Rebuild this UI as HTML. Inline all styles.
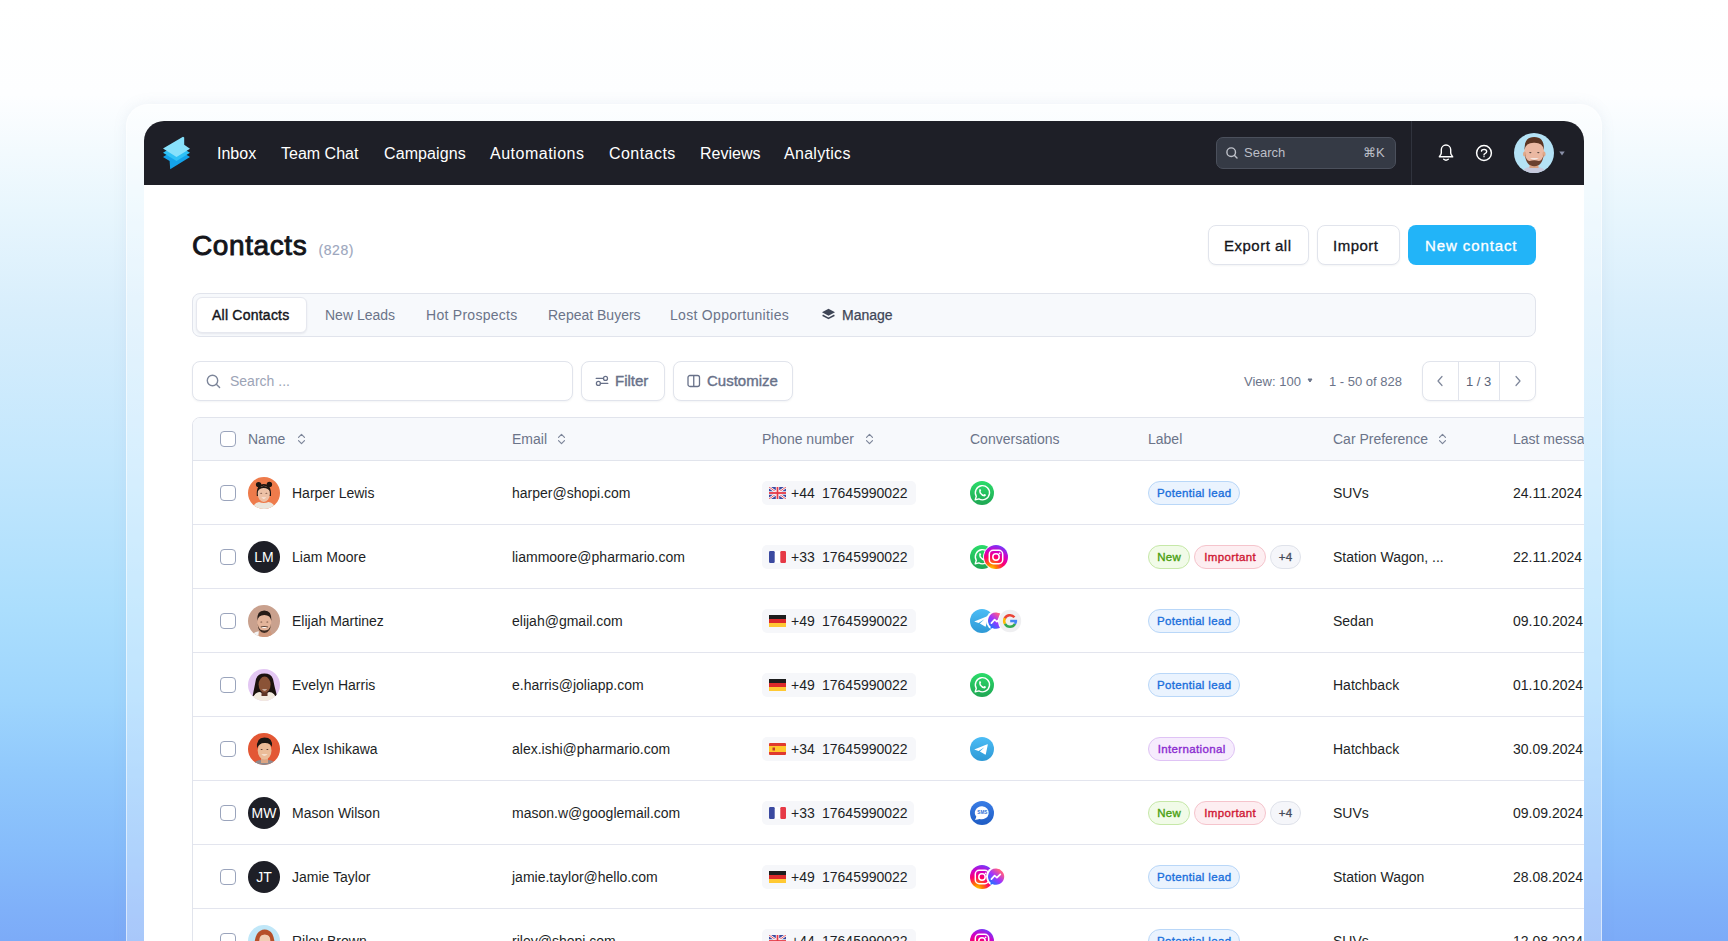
<!DOCTYPE html>
<html><head><meta charset="utf-8"><style>
*{box-sizing:border-box;margin:0;padding:0}
html,body{width:1728px;height:941px;overflow:hidden}
body{position:relative;font-family:"Liberation Sans",sans-serif;color:#1d1f26;
background:linear-gradient(180deg,#ffffff 0%,#fdfeff 10%,#e8f6fd 22.3%,#d8eefc 32.9%,#c3e7fd 48.9%,#abdefd 64.8%,#9ed5fd 74.4%,#91c9fc 81.8%,#86bcfb 90.3%,#7fb0f9 96.7%,#7cabf8 100%)}
.abs{position:absolute}
#frame{position:absolute;left:126px;top:104px;width:1476px;height:900px;border-radius:22px;background:rgba(255,255,255,0.34);box-shadow:0 0 14px rgba(120,140,170,0.10);border:1px solid rgba(255,255,255,0.55)}
#app{position:absolute;left:144px;top:121px;width:1440px;height:900px;background:#fff;border-radius:20px 20px 0 0;overflow:hidden}
#nav{position:absolute;left:0;top:0;width:1440px;height:64px;background:#1e1f27}
.nv{position:absolute;top:1px;height:64px;line-height:64px;color:#fff;font-size:16px;white-space:nowrap}
.t{position:absolute;white-space:nowrap}
.btn{position:absolute;height:40px;border:1px solid #e1e4ec;border-radius:8px;background:#fff;box-shadow:0 1px 2px rgba(20,30,60,0.05)}
.pill{position:absolute;height:24px;border-radius:12px;border:1px solid;font-size:11.5px;line-height:23px;letter-spacing:0.35px;text-indent:0.35px;-webkit-text-stroke:0.35px currentColor;white-space:nowrap;text-align:center}
.cb{position:absolute;width:16px;height:16px;border:1.5px solid #9aa4bc;border-radius:4px;background:#fff}
.tbl-row{position:absolute;left:0;width:1400px;height:64px;border-bottom:1px solid #e3e5ee}
.phone{position:absolute;height:24px;background:#f6f7fa;border-radius:5px}
.av{position:absolute;width:32px;height:32px;border-radius:16px;overflow:hidden}
.ini{background:#1e1f27;color:#fff;font-size:14px;line-height:32px;text-align:center}
</style></head><body>
<div id="frame"></div>
<div id="app">
<div id="nav">
<svg class="abs" style="left:18px;top:15px" width="30" height="35" viewBox="162 136 30 35">
<polygon points="163,157 176.5,148.6 190,157 170.2,169.2 169.6,161" fill="#14a3ea"/>
<polygon points="163,152.7 176.5,144.5 190,152.8 176.5,161" fill="#2ec1f6"/>
<polygon points="163,148.6 183,136.8 184.2,137.6 184.2,144.8 190,148.8 176.5,157" fill="#87e1fb"/>
</svg>
<div class="nv" style="left:73px;letter-spacing:0px">Inbox</div>
<div class="nv" style="left:137px;letter-spacing:0px">Team Chat</div>
<div class="nv" style="left:240px;letter-spacing:0.1px">Campaigns</div>
<div class="nv" style="left:346px;letter-spacing:0.5px">Automations</div>
<div class="nv" style="left:465px;letter-spacing:0.45px">Contacts</div>
<div class="nv" style="left:556px;letter-spacing:0px">Reviews</div>
<div class="nv" style="left:640px;letter-spacing:0.3px">Analytics</div>
<div class="abs" style="left:1072px;top:16px;width:180px;height:32px;background:#353a45;border:1px solid #4b505c;border-radius:7px"></div>
<svg class="abs" style="left:1082px;top:26px" width="12" height="12" viewBox="0 0 12 12"><circle cx="5.2" cy="5.2" r="4.3" fill="none" stroke="#bfc2ca" stroke-width="1.4"/><line x1="8.3" y1="8.3" x2="11" y2="11" stroke="#bfc2ca" stroke-width="1.4" stroke-linecap="round"/></svg>
<div class="t" style="left:1100px;top:24px;font-size:13px;line-height:16px;color:#bcbfc8">Search</div>
<div class="t" style="left:1219px;top:24px;font-size:13px;line-height:16px;color:#bcbfc8">&#8984;K</div>
<div class="abs" style="left:1267px;top:0;width:1px;height:64px;background:#30333d"></div>
<svg class="abs" style="left:1292px;top:22px" width="20" height="20" viewBox="0 0 20 20"><path d="M3.3 13.8 L4.7 11.7 Q5.3 10.7 5.3 9.4 V6.7 A4.7 4.7 0 0 1 14.7 6.7 V9.4 Q14.7 10.7 15.3 11.7 L16.7 13.8 Z" fill="none" stroke="#fff" stroke-width="1.4" stroke-linejoin="round"/><path d="M7.7 16.3 Q10 18.1 12.3 16.3" fill="none" stroke="#fff" stroke-width="1.4" stroke-linecap="round"/></svg>
<svg class="abs" style="left:1331px;top:23px" width="18" height="18" viewBox="0 0 18 18"><circle cx="9" cy="9" r="7.4" fill="none" stroke="#fff" stroke-width="1.5"/><path d="M6.5 7.1 Q6.7 5.4 9.1 5.4 Q11.7 5.5 11.7 7.6 Q11.7 9 10 9.6 Q9 10 9 10.9" fill="none" stroke="#fff" stroke-width="1.4" stroke-linecap="round"/><rect x="8.3" y="12.2" width="1.4" height="1" fill="#fff"/></svg>
<svg class="abs" style="left:1370px;top:12px" width="40" height="40" viewBox="0 0 40 40">
<defs><clipPath id="cav"><circle cx="20" cy="20" r="20"/></clipPath></defs>
<g clip-path="url(#cav)">
<rect width="40" height="40" fill="#b4e2f5"/>
<path d="M6 42 Q8 34 20 33.5 Q32 34 34 42 Z" fill="#c7c9dc"/>
<rect x="15.5" y="27" width="9" height="8" fill="#d9a283"/>
<ellipse cx="20.3" cy="19.5" rx="10" ry="13" fill="#eab8a2"/>
<ellipse cx="10.6" cy="21" rx="1.6" ry="2.6" fill="#e0a888"/><ellipse cx="30" cy="21" rx="1.6" ry="2.6" fill="#e0a888"/>
<path d="M10.6 17 Q9.8 4 20.2 4 Q30.6 4 29.8 17 Q28.8 9.6 20.2 9.8 Q11.6 9.6 10.6 17 Z" fill="#5a3422"/>
<path d="M11 21 Q11.5 33 20.3 33.2 Q29 33 29.6 21 Q28.6 27.6 25 28 Q20.3 26.6 15.6 28 Q12 27.6 11 21 Z" fill="#6a4130"/>
<path d="M15.8 25 Q20.3 28.6 24.8 25 Z" fill="#f4e8e4"/>
<ellipse cx="16.3" cy="19.6" rx="1.2" ry="0.7" fill="#55463f"/><ellipse cx="24.3" cy="19.6" rx="1.2" ry="0.7" fill="#55463f"/>
</g></svg>
<svg class="abs" style="left:1415px;top:30px" width="6" height="5" viewBox="0 0 6 5"><path d="M0.3 0.6 H5.7 L3 4.4 Z" fill="#8a90a8"/></svg>
</div>
<div class="t" style="left:48px;top:109px;font-size:28px;line-height:32px;-webkit-text-stroke:0.9px #14151a;letter-spacing:0.6px;color:#14151a">Contacts</div>
<div class="t" style="left:174.5px;top:121.30000000000001px;font-size:14px;line-height:16px;letter-spacing:0.55px;-webkit-text-stroke:0.15px #9ca6bd;color:#9ca6bd">(828)</div>
<div class="btn" style="left:1064px;top:104px;width:101px"></div>
<div class="t" style="left:1080px;top:115.6px;font-size:15px;line-height:18px;-webkit-text-stroke:0.3px #14151a;letter-spacing:0.5px;color:#14151a">Export all</div>
<div class="btn" style="left:1173px;top:104px;width:83px"></div>
<div class="t" style="left:1189px;top:115.6px;font-size:15px;line-height:18px;-webkit-text-stroke:0.3px #14151a;letter-spacing:0.5px;color:#14151a">Import</div>
<div class="abs" style="left:1264px;top:104px;width:128px;height:40px;border-radius:8px;background:#22b4f8"></div>
<div class="t" style="left:1281px;top:115.6px;font-size:15px;line-height:18px;-webkit-text-stroke:0.3px #fff;letter-spacing:0.9px;color:#fff">New contact</div>
<div class="abs" style="left:48px;top:172px;width:1344px;height:44px;background:#f7f9fc;border:1px solid #e1e4ec;border-radius:8px"></div>
<div class="abs" style="left:52px;top:176px;width:111px;height:36px;background:#fff;border:1px solid #e6e8ef;border-radius:6px;box-shadow:0 1px 2px rgba(20,30,60,0.08)"></div>
<div class="t" style="left:68px;top:186px;font-size:14px;line-height:16px;font-weight:normal;-webkit-text-stroke:0.4px #14151a;letter-spacing:0.23px;color:#14151a">All Contacts</div>
<div class="t" style="left:181px;top:186px;font-size:14px;line-height:16px;font-weight:normal;color:#6b7489">New Leads</div>
<div class="t" style="left:282px;top:186px;font-size:14px;line-height:16px;font-weight:normal;letter-spacing:0.28px;color:#6b7489">Hot Prospects</div>
<div class="t" style="left:404px;top:186px;font-size:14px;line-height:16px;font-weight:normal;color:#6b7489">Repeat Buyers</div>
<div class="t" style="left:526px;top:186px;font-size:14px;line-height:16px;font-weight:normal;letter-spacing:0.3px;color:#6b7489">Lost Opportunities</div>
<div class="t" style="left:698px;top:186px;font-size:14px;line-height:16px;font-weight:normal;-webkit-text-stroke:0.25px #3f4657;color:#3f4657">Manage</div>
<svg class="abs" style="left:677px;top:187px" width="15" height="13" viewBox="0 0 15 13"><path d="M7.5 0.8 L14 4.3 L7.5 7.8 L1 4.3 Z" fill="#3f4657"/><path d="M1.6 7.2 L7.5 10.4 L13.4 7.2" fill="none" stroke="#3f4657" stroke-width="1.6" stroke-linejoin="round"/></svg>
<div class="btn" style="left:48px;top:240px;width:381px"></div>
<svg class="abs" style="left:62px;top:253px" width="15" height="15" viewBox="0 0 15 15"><circle cx="6.5" cy="6.5" r="5.2" fill="none" stroke="#7d869a" stroke-width="1.4"/><line x1="10.3" y1="10.3" x2="13.6" y2="13.6" stroke="#7d869a" stroke-width="1.4" stroke-linecap="round"/></svg>
<div class="t" style="left:86px;top:252px;font-size:14px;line-height:16px;color:#9ca4b6">Search ...</div>
<div class="btn" style="left:437px;top:240px;width:84px"></div>
<svg class="abs" style="left:451px;top:254px" width="14" height="12" viewBox="0 0 14 12"><line x1="1.2" y1="3.4" x2="8.5" y2="3.4" stroke="#687189" stroke-width="1.25" stroke-linecap="round"/><line x1="5.4" y1="8.4" x2="12.8" y2="8.4" stroke="#687189" stroke-width="1.25" stroke-linecap="round"/><circle cx="10.5" cy="3.4" r="2" fill="none" stroke="#687189" stroke-width="1.25"/><circle cx="3.4" cy="8.4" r="2" fill="none" stroke="#687189" stroke-width="1.25"/></svg>
<div class="t" style="left:471px;top:252px;font-size:15px;line-height:16px;-webkit-text-stroke:0.4px #687189;color:#687189">Filter</div>
<div class="btn" style="left:529px;top:240px;width:120px"></div>
<svg class="abs" style="left:543px;top:253px" width="14" height="14" viewBox="0 0 14 14"><rect x="1" y="1.5" width="11.5" height="11" rx="2" fill="none" stroke="#687189" stroke-width="1.3"/><line x1="6.75" y1="1.5" x2="6.75" y2="12.5" stroke="#687189" stroke-width="1.3"/></svg>
<div class="t" style="left:563px;top:252px;font-size:15px;line-height:16px;-webkit-text-stroke:0.4px #687189;color:#687189">Customize</div>
<div class="t" style="left:1100px;top:253px;font-size:13px;line-height:15px;color:#6b7489">View: 100</div>
<svg class="abs" style="left:1163px;top:257px" width="6" height="5" viewBox="0 0 6 5"><path d="M1 1 H5 L3 4 Z" fill="#6b7489" stroke="#6b7489" stroke-width="1" stroke-linejoin="round"/></svg>
<div class="t" style="left:1185px;top:253px;font-size:13px;line-height:15px;color:#6b7489">1 - 50 of 828</div>
<div class="btn" style="left:1278px;top:240px;width:114px"></div>
<div class="abs" style="left:1314px;top:240px;width:1px;height:40px;background:#e1e4ec"></div>
<div class="abs" style="left:1355px;top:240px;width:1px;height:40px;background:#e1e4ec"></div>
<svg class="abs" style="left:1291px;top:254px" width="10" height="12" viewBox="0 0 10 12"><path d="M7 1.5 L3 6 L7 10.5" fill="none" stroke="#7d869a" stroke-width="1.2" stroke-linecap="round" stroke-linejoin="round"/></svg>
<div class="t" style="left:1322px;top:253px;font-size:13px;line-height:15px;color:#5a6378">1 / 3</div>
<svg class="abs" style="left:1369px;top:254px" width="10" height="12" viewBox="0 0 10 12"><path d="M3 1.5 L7 6 L3 10.5" fill="none" stroke="#7d869a" stroke-width="1.2" stroke-linecap="round" stroke-linejoin="round"/></svg>
<div class="abs" style="left:48px;top:296px;width:1500px;height:700px;border:1px solid #e1e4ec;border-radius:8px 0 0 0;overflow:hidden"><div class="abs" style="left:0;top:0;width:1500px;height:43px;background:#f7f9fc;border-bottom:1px solid #e1e4ec"></div>
<div class="cb" style="left:27px;top:13px"></div>
<div class="t" style="left:55px;top:13px;font-size:14px;line-height:16px;color:#6b7489">Name</div>
<svg class="abs" style="left:104px;top:15px" width="9" height="12" viewBox="0 0 9 12"><path d="M1.5 4.3 L4.5 1.3 L7.5 4.3 M1.5 7.7 L4.5 10.7 L7.5 7.7" fill="none" stroke="#7d869a" stroke-width="1.2" stroke-linecap="round" stroke-linejoin="round"/></svg>
<div class="t" style="left:319px;top:13px;font-size:14px;line-height:16px;color:#6b7489">Email</div>
<svg class="abs" style="left:364px;top:15px" width="9" height="12" viewBox="0 0 9 12"><path d="M1.5 4.3 L4.5 1.3 L7.5 4.3 M1.5 7.7 L4.5 10.7 L7.5 7.7" fill="none" stroke="#7d869a" stroke-width="1.2" stroke-linecap="round" stroke-linejoin="round"/></svg>
<div class="t" style="left:569px;top:13px;font-size:14px;line-height:16px;color:#6b7489">Phone number</div>
<svg class="abs" style="left:672px;top:15px" width="9" height="12" viewBox="0 0 9 12"><path d="M1.5 4.3 L4.5 1.3 L7.5 4.3 M1.5 7.7 L4.5 10.7 L7.5 7.7" fill="none" stroke="#7d869a" stroke-width="1.2" stroke-linecap="round" stroke-linejoin="round"/></svg>
<div class="t" style="left:777px;top:13px;font-size:14px;line-height:16px;color:#6b7489">Conversations</div>
<div class="t" style="left:955px;top:13px;font-size:14px;line-height:16px;color:#6b7489">Label</div>
<div class="t" style="left:1140px;top:13px;font-size:14px;line-height:16px;color:#6b7489">Car Preference</div>
<svg class="abs" style="left:1245px;top:15px" width="9" height="12" viewBox="0 0 9 12"><path d="M1.5 4.3 L4.5 1.3 L7.5 4.3 M1.5 7.7 L4.5 10.7 L7.5 7.7" fill="none" stroke="#7d869a" stroke-width="1.2" stroke-linecap="round" stroke-linejoin="round"/></svg>
<div class="t" style="left:1320px;top:13px;font-size:14px;line-height:16px;color:#6b7489">Last message</div>
<div class="tbl-row" style="top:43px"></div>
<div class="cb" style="left:27px;top:67px"></div>
<svg class="abs" style="left:55px;top:59px" width="32" height="32" viewBox="0 0 32 32"><defs><clipPath id="charper"><circle cx="16" cy="16" r="16"/></clipPath></defs><g clip-path="url(#charper)"><rect width="32" height="32" fill="#ee7b4b"/><path d="M8.8 19 Q8 7.2 15.8 7 Q23.6 7.2 23 19 Z" fill="#1d1511"/><circle cx="10.6" cy="7.6" r="2.7" fill="#1d1511"/><circle cx="21.4" cy="7.4" r="2.7" fill="#1d1511"/><path d="M4 34 Q5 26 11 25 Q15.8 27 20.6 25 Q27 26 28 34 Z" fill="#ebe6dc"/><ellipse cx="15.8" cy="16.8" rx="6.1" ry="8.1" fill="#edc1a6"/><path d="M9.7 14.6 Q9.8 9.2 15.8 9.1 Q21.8 9.2 21.9 14.6 Q20.4 11.2 15.8 11.1 Q11.2 11.2 9.7 14.6 Z" fill="#1d1511"/><ellipse cx="13.2" cy="16.2" rx="1" ry="0.55" fill="#7a5546"/><ellipse cx="18.4" cy="16.2" rx="1" ry="0.55" fill="#7a5546"/><path d="M13.3 20.6 Q15.8 22.8 18.3 20.6 Z" fill="#fff2ee"/></g></svg>
<div class="t" style="left:99px;top:67px;font-size:14px;line-height:16px;color:#1d1f26">Harper Lewis</div>
<div class="t" style="left:319px;top:67px;font-size:14px;line-height:16px;color:#1d1f26">harper@shopi.com</div>
<div class="phone" style="left:569px;top:63px;width:154px"></div>
<svg class="abs" style="left:576px;top:69px" width="17" height="12" viewBox="0 0 17 12"><rect width="17" height="12" rx="1.5" fill="#3b4aa0"/><path d="M0 0 L17 12 M17 0 L0 12" stroke="#fff" stroke-width="2.4"/><path d="M0 0 L17 12 M17 0 L0 12" stroke="#e63946" stroke-width="0.8"/><rect x="6.8" y="0" width="3.4" height="12" fill="#fff"/><rect x="0" y="4.3" width="17" height="3.4" fill="#fff"/><rect x="7.6" y="0" width="1.8" height="12" fill="#e63946"/><rect x="0" y="5.1" width="17" height="1.8" fill="#e63946"/></svg>
<div class="t" style="left:598px;top:67px;font-size:14px;line-height:16px;color:#1d1f26">+44</div>
<div class="t" style="left:629px;top:67px;font-size:14px;line-height:16px;color:#1d1f26">17645990022</div>
<svg class="abs" style="left:777px;top:63px;overflow:visible" width="24" height="24" viewBox="0 0 24 24"><defs><linearGradient id="gw" x1="0" y1="0" x2="0" y2="1"><stop offset="0" stop-color="#2bdc6a"/><stop offset="1" stop-color="#1fa653"/></linearGradient></defs><circle cx="12" cy="12" r="12" fill="url(#gw)"/><path d="M5.2 18.9 L6.3 15.3 A7.1 7.1 0 1 1 8.9 17.9 Z" fill="none" stroke="#fff" stroke-width="1.4" stroke-linejoin="round"/><path d="M9.3 8.6 Q9.6 7.8 10.3 7.9 L11.2 9.8 L10.5 10.8 Q11.4 12.8 13.4 13.7 L14.3 12.9 L16.1 13.8 Q16 15.1 14.6 15.4 Q11.6 15.3 9.6 12.2 Q8.9 10.2 9.3 8.6 Z" fill="#fff"/></svg>
<div class="pill" style="left:955px;top:63px;width:92px;background:#eaf3fe;border-color:#b9d7f8;color:#1a6fdc">Potential lead</div>
<div class="t" style="left:1140px;top:67px;font-size:14px;line-height:16px;color:#1d1f26">SUVs</div>
<div class="t" style="left:1320px;top:67px;font-size:14px;line-height:16px;color:#1d1f26">24.11.2024</div>
<div class="tbl-row" style="top:107px"></div>
<div class="cb" style="left:27px;top:131px"></div>
<div class="av ini" style="left:55px;top:123px">LM</div>
<div class="t" style="left:99px;top:131px;font-size:14px;line-height:16px;color:#1d1f26">Liam Moore</div>
<div class="t" style="left:319px;top:131px;font-size:14px;line-height:16px;color:#1d1f26">liammoore@pharmario.com</div>
<div class="phone" style="left:569px;top:127px;width:152px"></div>
<svg class="abs" style="left:576px;top:133px" width="17" height="12" viewBox="0 0 17 12"><rect width="17" height="12" rx="1.5" fill="#fff"/><rect x="0" width="5.7" height="12" rx="1.2" fill="#3b4aa0"/><rect x="11.3" width="5.7" height="12" rx="1.2" fill="#e63946"/></svg>
<div class="t" style="left:598px;top:131px;font-size:14px;line-height:16px;color:#1d1f26">+33</div>
<div class="t" style="left:629px;top:131px;font-size:14px;line-height:16px;color:#1d1f26">17645990022</div>
<svg class="abs" style="left:777px;top:127px;overflow:visible" width="24" height="24" viewBox="0 0 24 24"><defs><linearGradient id="gw" x1="0" y1="0" x2="0" y2="1"><stop offset="0" stop-color="#2bdc6a"/><stop offset="1" stop-color="#1fa653"/></linearGradient></defs><circle cx="12" cy="12" r="12" fill="url(#gw)"/><path d="M5.2 18.9 L6.3 15.3 A7.1 7.1 0 1 1 8.9 17.9 Z" fill="none" stroke="#fff" stroke-width="1.4" stroke-linejoin="round"/><path d="M9.3 8.6 Q9.6 7.8 10.3 7.9 L11.2 9.8 L10.5 10.8 Q11.4 12.8 13.4 13.7 L14.3 12.9 L16.1 13.8 Q16 15.1 14.6 15.4 Q11.6 15.3 9.6 12.2 Q8.9 10.2 9.3 8.6 Z" fill="#fff"/></svg>
<svg class="abs" style="left:791px;top:127px;overflow:visible" width="24" height="24" viewBox="0 0 24 24"><defs><radialGradient id="gi" cx="0.3" cy="1.02" r="1.05"><stop offset="0" stop-color="#ffd600"/><stop offset="0.22" stop-color="#ff7a00"/><stop offset="0.5" stop-color="#ff0069"/><stop offset="0.75" stop-color="#d300c5"/><stop offset="1" stop-color="#7638fa"/></radialGradient></defs><circle cx="12" cy="12" r="12.9" fill="#fff"/><circle cx="12" cy="12" r="12" fill="url(#gi)"/><rect x="5.3" y="5.3" width="13.4" height="13.4" rx="3.9" fill="none" stroke="#fff" stroke-width="1.5"/><circle cx="12" cy="12" r="3.2" fill="none" stroke="#fff" stroke-width="1.5"/><circle cx="15.6" cy="8.3" r="0.85" fill="#fff"/></svg>
<div class="pill" style="left:955px;top:127px;width:42px;background:#f1fbe8;border-color:#c6e8a8;color:#4a9f10">New</div>
<div class="pill" style="left:1001px;top:127px;width:72px;background:#fdeef1;border-color:#f5c4cc;color:#cf1733">Important</div>
<div class="pill" style="left:1077px;top:127px;width:31px;background:#f5f6fa;border-color:#dfe2ea;color:#474d5c">+4</div>
<div class="t" style="left:1140px;top:131px;font-size:14px;line-height:16px;color:#1d1f26">Station Wagon, ...</div>
<div class="t" style="left:1320px;top:131px;font-size:14px;line-height:16px;color:#1d1f26">22.11.2024</div>
<div class="tbl-row" style="top:171px"></div>
<div class="cb" style="left:27px;top:195px"></div>
<svg class="abs" style="left:55px;top:187px" width="32" height="32" viewBox="0 0 32 32"><defs><clipPath id="celijah"><circle cx="16" cy="16" r="16"/></clipPath></defs><g clip-path="url(#celijah)"><rect width="32" height="32" fill="#c9a18e"/><path d="M2 34 Q3 27 12 26 L14 32 Z" fill="#f4f4f4"/><path d="M10 34 L11 25 Q16 27 22 25 L26 34 Z" fill="#cf987c"/><ellipse cx="16.3" cy="18" rx="7" ry="9.3" fill="#e3b49a"/><path d="M9.2 16 Q8.6 5.6 16.3 5.6 Q24 5.6 23.4 16 Q22.6 10 16.3 10 Q10 10 9.2 16 Z" fill="#251b16"/><path d="M9.6 18.6 Q10 27.8 16.3 28 Q22.6 27.8 23 18.6 Q22.4 23 20.4 24.6 Q16.3 26.4 12.2 24.6 Q10.2 23 9.6 18.6 Z" fill="#3f2c22"/><path d="M12.6 21.6 Q16.3 20.6 20 21.6 L19.6 22.4 Q16.3 21.8 13 22.4 Z" fill="#5a4034"/><path d="M13.2 22 Q16.3 24.2 19.4 22 Z" fill="#fff"/><ellipse cx="13.3" cy="17" rx="1" ry="0.6" fill="#6a4a3c"/><ellipse cx="19.3" cy="17" rx="1" ry="0.6" fill="#6a4a3c"/></g></svg>
<div class="t" style="left:99px;top:195px;font-size:14px;line-height:16px;color:#1d1f26">Elijah Martinez</div>
<div class="t" style="left:319px;top:195px;font-size:14px;line-height:16px;color:#1d1f26">elijah@gmail.com</div>
<div class="phone" style="left:569px;top:191px;width:154px"></div>
<svg class="abs" style="left:576px;top:197px" width="17" height="12" viewBox="0 0 17 12"><rect width="17" height="4" fill="#1d1d1d"/><rect y="4" width="17" height="4" fill="#dd2a2a"/><rect y="8" width="17" height="4" fill="#ffc933"/></svg>
<div class="t" style="left:598px;top:195px;font-size:14px;line-height:16px;color:#1d1f26">+49</div>
<div class="t" style="left:629px;top:195px;font-size:14px;line-height:16px;color:#1d1f26">17645990022</div>
<svg class="abs" style="left:777px;top:191px;overflow:visible" width="24" height="24" viewBox="0 0 24 24"><defs><linearGradient id="gt" x1="0" y1="0" x2="0" y2="1"><stop offset="0" stop-color="#4cbdf6"/><stop offset="1" stop-color="#2e99d5"/></linearGradient></defs><circle cx="12" cy="12" r="12" fill="url(#gt)"/><path d="M4.2 12.6 L17.3 7.3 Q17.9 7.1 17.8 7.8 L15.8 17.3 Q15.6 18 15 17.6 L9.9 14.5 L14.4 10.3 L8.6 13.9 Z" fill="#fff"/></svg>
<svg class="abs" style="left:791px;top:191px" width="24" height="24" viewBox="0 0 24 24"><defs><linearGradient id="gm" x1="0.1" y1="0.95" x2="0.85" y2="0.1"><stop offset="0" stop-color="#0a7cff"/><stop offset="0.5" stop-color="#a033ff"/><stop offset="0.9" stop-color="#ff5c87"/></linearGradient></defs><circle cx="12" cy="11.6" r="10" fill="#fff"/><path d="M12 3.6 A8.1 8.1 0 1 1 8.4 18.9 L6.5 20 L6.6 17.6 A8.1 8.1 0 0 1 12 3.6 Z" fill="url(#gm)"/><path d="M7.4 14.1 L10.6 10.7 L12.9 12.6 L16.3 9.3" fill="none" stroke="#fff" stroke-width="1.7" stroke-linecap="round" stroke-linejoin="round"/></svg>
<svg class="abs" style="left:805px;top:191px" width="24" height="24" viewBox="0 0 24 24"><circle cx="12" cy="12" r="12" fill="#fff"/><circle cx="12" cy="12" r="11.2" fill="#efeff1"/><path d="M6.55 10.02 A5.8 5.8 0 0 1 16.44 8.27" fill="none" stroke="#ea4335" stroke-width="2.5"/><path d="M6.98 14.9 A5.8 5.8 0 0 1 6.98 9.1" fill="none" stroke="#fbbc05" stroke-width="2.5"/><path d="M17.02 14.9 A5.8 5.8 0 0 1 6.98 14.9" fill="none" stroke="#34a853" stroke-width="2.5"/><path d="M17.8 12 A5.8 5.8 0 0 1 17.02 14.9" fill="none" stroke="#4285f4" stroke-width="2.5"/><rect x="12.2" y="10.8" width="6.9" height="2.5" fill="#4285f4"/></svg>
<div class="pill" style="left:955px;top:191px;width:92px;background:#eaf3fe;border-color:#b9d7f8;color:#1a6fdc">Potential lead</div>
<div class="t" style="left:1140px;top:195px;font-size:14px;line-height:16px;color:#1d1f26">Sedan</div>
<div class="t" style="left:1320px;top:195px;font-size:14px;line-height:16px;color:#1d1f26">09.10.2024</div>
<div class="tbl-row" style="top:235px"></div>
<div class="cb" style="left:27px;top:259px"></div>
<svg class="abs" style="left:55px;top:251px" width="32" height="32" viewBox="0 0 32 32"><defs><clipPath id="cevelyn"><circle cx="16" cy="16" r="16"/></clipPath></defs><g clip-path="url(#cevelyn)"><rect width="32" height="32" fill="#e3c7f3"/><path d="M4.6 27 Q6.5 18 8 10 Q10 4.6 16.4 4.6 Q23 4.6 25 10 Q26.5 18 29 27 Z" fill="#1b120e"/><path d="M4 34 Q5 23 12 23 Q16 26 21 23 Q28 23 29 34 Z" fill="#f3ebdf"/><rect x="13.5" y="20" width="6" height="7" fill="#5e3524"/><ellipse cx="16.6" cy="15.6" rx="6" ry="8" fill="#8a5337"/><path d="M14 20.4 Q16.6 22.6 19.2 20.4 Z" fill="#fff"/></g></svg>
<div class="t" style="left:99px;top:259px;font-size:14px;line-height:16px;color:#1d1f26">Evelyn Harris</div>
<div class="t" style="left:319px;top:259px;font-size:14px;line-height:16px;color:#1d1f26">e.harris@joliapp.com</div>
<div class="phone" style="left:569px;top:255px;width:154px"></div>
<svg class="abs" style="left:576px;top:261px" width="17" height="12" viewBox="0 0 17 12"><rect width="17" height="4" fill="#1d1d1d"/><rect y="4" width="17" height="4" fill="#dd2a2a"/><rect y="8" width="17" height="4" fill="#ffc933"/></svg>
<div class="t" style="left:598px;top:259px;font-size:14px;line-height:16px;color:#1d1f26">+49</div>
<div class="t" style="left:629px;top:259px;font-size:14px;line-height:16px;color:#1d1f26">17645990022</div>
<svg class="abs" style="left:777px;top:255px;overflow:visible" width="24" height="24" viewBox="0 0 24 24"><defs><linearGradient id="gw" x1="0" y1="0" x2="0" y2="1"><stop offset="0" stop-color="#2bdc6a"/><stop offset="1" stop-color="#1fa653"/></linearGradient></defs><circle cx="12" cy="12" r="12" fill="url(#gw)"/><path d="M5.2 18.9 L6.3 15.3 A7.1 7.1 0 1 1 8.9 17.9 Z" fill="none" stroke="#fff" stroke-width="1.4" stroke-linejoin="round"/><path d="M9.3 8.6 Q9.6 7.8 10.3 7.9 L11.2 9.8 L10.5 10.8 Q11.4 12.8 13.4 13.7 L14.3 12.9 L16.1 13.8 Q16 15.1 14.6 15.4 Q11.6 15.3 9.6 12.2 Q8.9 10.2 9.3 8.6 Z" fill="#fff"/></svg>
<div class="pill" style="left:955px;top:255px;width:92px;background:#eaf3fe;border-color:#b9d7f8;color:#1a6fdc">Potential lead</div>
<div class="t" style="left:1140px;top:259px;font-size:14px;line-height:16px;color:#1d1f26">Hatchback</div>
<div class="t" style="left:1320px;top:259px;font-size:14px;line-height:16px;color:#1d1f26">01.10.2024</div>
<div class="tbl-row" style="top:299px"></div>
<div class="cb" style="left:27px;top:323px"></div>
<svg class="abs" style="left:55px;top:315px" width="32" height="32" viewBox="0 0 32 32"><defs><clipPath id="calex"><circle cx="16" cy="16" r="16"/></clipPath></defs><g clip-path="url(#calex)"><rect width="32" height="32" fill="#e35734"/><path d="M5 34 Q6 27 13 27 L20 27 Q27 27 28 34 Z" fill="#8e8a8e"/><rect x="13" y="22" width="7" height="8" fill="#dca583"/><ellipse cx="16.6" cy="17.6" rx="6.9" ry="9" fill="#ebbc98"/><path d="M9 15.5 Q8 4.6 16.4 4.6 Q25 4.6 24 14 Q22 9.6 16.4 10 Q11 10 9 15.5 Z" fill="#1b1714"/><path d="M13.4 21.6 Q16.6 23.6 19.6 21.4 Z" fill="#fff"/><ellipse cx="13.6" cy="16.6" rx="1" ry="0.5" fill="#5a3e30"/><ellipse cx="19.4" cy="16.4" rx="1" ry="0.5" fill="#5a3e30"/></g></svg>
<div class="t" style="left:99px;top:323px;font-size:14px;line-height:16px;color:#1d1f26">Alex Ishikawa</div>
<div class="t" style="left:319px;top:323px;font-size:14px;line-height:16px;color:#1d1f26">alex.ishi@pharmario.com</div>
<div class="phone" style="left:569px;top:319px;width:154px"></div>
<svg class="abs" style="left:576px;top:325px" width="17" height="12" viewBox="0 0 17 12"><rect width="17" height="12" rx="1" fill="#e03a2f"/><rect y="3" width="17" height="6" fill="#ffc72c"/><rect x="3.5" y="4.5" width="2.5" height="3" fill="#c0392b"/></svg>
<div class="t" style="left:598px;top:323px;font-size:14px;line-height:16px;color:#1d1f26">+34</div>
<div class="t" style="left:629px;top:323px;font-size:14px;line-height:16px;color:#1d1f26">17645990022</div>
<svg class="abs" style="left:777px;top:319px;overflow:visible" width="24" height="24" viewBox="0 0 24 24"><defs><linearGradient id="gt" x1="0" y1="0" x2="0" y2="1"><stop offset="0" stop-color="#4cbdf6"/><stop offset="1" stop-color="#2e99d5"/></linearGradient></defs><circle cx="12" cy="12" r="12" fill="url(#gt)"/><path d="M4.2 12.6 L17.3 7.3 Q17.9 7.1 17.8 7.8 L15.8 17.3 Q15.6 18 15 17.6 L9.9 14.5 L14.4 10.3 L8.6 13.9 Z" fill="#fff"/></svg>
<div class="pill" style="left:955px;top:319px;width:87px;background:#f6ecfd;border-color:#dfc3f5;color:#8a2bd0">International</div>
<div class="t" style="left:1140px;top:323px;font-size:14px;line-height:16px;color:#1d1f26">Hatchback</div>
<div class="t" style="left:1320px;top:323px;font-size:14px;line-height:16px;color:#1d1f26">30.09.2024</div>
<div class="tbl-row" style="top:363px"></div>
<div class="cb" style="left:27px;top:387px"></div>
<div class="av ini" style="left:55px;top:379px">MW</div>
<div class="t" style="left:99px;top:387px;font-size:14px;line-height:16px;color:#1d1f26">Mason Wilson</div>
<div class="t" style="left:319px;top:387px;font-size:14px;line-height:16px;color:#1d1f26">mason.w@googlemail.com</div>
<div class="phone" style="left:569px;top:383px;width:152px"></div>
<svg class="abs" style="left:576px;top:389px" width="17" height="12" viewBox="0 0 17 12"><rect width="17" height="12" rx="1.5" fill="#fff"/><rect x="0" width="5.7" height="12" rx="1.2" fill="#3b4aa0"/><rect x="11.3" width="5.7" height="12" rx="1.2" fill="#e63946"/></svg>
<div class="t" style="left:598px;top:387px;font-size:14px;line-height:16px;color:#1d1f26">+33</div>
<div class="t" style="left:629px;top:387px;font-size:14px;line-height:16px;color:#1d1f26">17645990022</div>
<svg class="abs" style="left:777px;top:383px" width="24" height="24" viewBox="0 0 24 24"><defs><linearGradient id="gs" x1="0" y1="0" x2="0" y2="1"><stop offset="0" stop-color="#3a7de6"/><stop offset="1" stop-color="#1f5cc4"/></linearGradient></defs><circle cx="12" cy="12" r="12" fill="url(#gs)"/><path d="M12.2 5.2 A7.1 6.5 0 1 1 9.6 17.9 Q7 18.9 4.8 18.7 Q6.2 17.4 6.3 15.6 A7.1 6.5 0 0 1 12.2 5.2 Z" fill="#fff"/><text x="12.3" y="13.4" font-size="4.6" font-weight="bold" text-anchor="middle" fill="#2d6fd8" font-family="Liberation Sans">SMS</text></svg>
<div class="pill" style="left:955px;top:383px;width:42px;background:#f1fbe8;border-color:#c6e8a8;color:#4a9f10">New</div>
<div class="pill" style="left:1001px;top:383px;width:72px;background:#fdeef1;border-color:#f5c4cc;color:#cf1733">Important</div>
<div class="pill" style="left:1077px;top:383px;width:31px;background:#f5f6fa;border-color:#dfe2ea;color:#474d5c">+4</div>
<div class="t" style="left:1140px;top:387px;font-size:14px;line-height:16px;color:#1d1f26">SUVs</div>
<div class="t" style="left:1320px;top:387px;font-size:14px;line-height:16px;color:#1d1f26">09.09.2024</div>
<div class="tbl-row" style="top:427px"></div>
<div class="cb" style="left:27px;top:451px"></div>
<div class="av ini" style="left:55px;top:443px">JT</div>
<div class="t" style="left:99px;top:451px;font-size:14px;line-height:16px;color:#1d1f26">Jamie Taylor</div>
<div class="t" style="left:319px;top:451px;font-size:14px;line-height:16px;color:#1d1f26">jamie.taylor@hello.com</div>
<div class="phone" style="left:569px;top:447px;width:154px"></div>
<svg class="abs" style="left:576px;top:453px" width="17" height="12" viewBox="0 0 17 12"><rect width="17" height="4" fill="#1d1d1d"/><rect y="4" width="17" height="4" fill="#dd2a2a"/><rect y="8" width="17" height="4" fill="#ffc933"/></svg>
<div class="t" style="left:598px;top:451px;font-size:14px;line-height:16px;color:#1d1f26">+49</div>
<div class="t" style="left:629px;top:451px;font-size:14px;line-height:16px;color:#1d1f26">17645990022</div>
<svg class="abs" style="left:777px;top:447px;overflow:visible" width="24" height="24" viewBox="0 0 24 24"><defs><radialGradient id="gi" cx="0.3" cy="1.02" r="1.05"><stop offset="0" stop-color="#ffd600"/><stop offset="0.22" stop-color="#ff7a00"/><stop offset="0.5" stop-color="#ff0069"/><stop offset="0.75" stop-color="#d300c5"/><stop offset="1" stop-color="#7638fa"/></radialGradient></defs><circle cx="12" cy="12" r="12.9" fill="#fff"/><circle cx="12" cy="12" r="12" fill="url(#gi)"/><rect x="5.3" y="5.3" width="13.4" height="13.4" rx="3.9" fill="none" stroke="#fff" stroke-width="1.5"/><circle cx="12" cy="12" r="3.2" fill="none" stroke="#fff" stroke-width="1.5"/><circle cx="15.6" cy="8.3" r="0.85" fill="#fff"/></svg>
<svg class="abs" style="left:791px;top:447px" width="24" height="24" viewBox="0 0 24 24"><defs><linearGradient id="gm" x1="0.1" y1="0.95" x2="0.85" y2="0.1"><stop offset="0" stop-color="#0a7cff"/><stop offset="0.5" stop-color="#a033ff"/><stop offset="0.9" stop-color="#ff5c87"/></linearGradient></defs><circle cx="12" cy="11.6" r="10" fill="#fff"/><path d="M12 3.6 A8.1 8.1 0 1 1 8.4 18.9 L6.5 20 L6.6 17.6 A8.1 8.1 0 0 1 12 3.6 Z" fill="url(#gm)"/><path d="M7.4 14.1 L10.6 10.7 L12.9 12.6 L16.3 9.3" fill="none" stroke="#fff" stroke-width="1.7" stroke-linecap="round" stroke-linejoin="round"/></svg>
<div class="pill" style="left:955px;top:447px;width:92px;background:#eaf3fe;border-color:#b9d7f8;color:#1a6fdc">Potential lead</div>
<div class="t" style="left:1140px;top:451px;font-size:14px;line-height:16px;color:#1d1f26">Station Wagon</div>
<div class="t" style="left:1320px;top:451px;font-size:14px;line-height:16px;color:#1d1f26">28.08.2024</div>
<div class="tbl-row" style="top:491px"></div>
<div class="cb" style="left:27px;top:515px"></div>
<svg class="abs" style="left:55px;top:507px" width="32" height="32" viewBox="0 0 32 32"><defs><clipPath id="criley"><circle cx="16" cy="16" r="16"/></clipPath></defs><g clip-path="url(#criley)"><rect width="32" height="32" fill="#c0e7f8"/><path d="M5 32 Q6 14 9 9 Q12 4.4 16.6 4.4 Q21.6 4.4 24.4 9 Q27 14 28 32 Z" fill="#b6502a"/><ellipse cx="16.8" cy="16" rx="5.6" ry="7.8" fill="#f1cdb3"/><path d="M11 12 Q12 7 16.8 7 Q21.4 7 22.4 12 Q20 9.4 16.8 9.4 Q13.4 9.4 11 12 Z" fill="#b6502a"/></g></svg>
<div class="t" style="left:99px;top:515px;font-size:14px;line-height:16px;color:#1d1f26">Riley Brown</div>
<div class="t" style="left:319px;top:515px;font-size:14px;line-height:16px;color:#1d1f26">riley@shopi.com</div>
<div class="phone" style="left:569px;top:511px;width:154px"></div>
<svg class="abs" style="left:576px;top:517px" width="17" height="12" viewBox="0 0 17 12"><rect width="17" height="12" rx="1.5" fill="#3b4aa0"/><path d="M0 0 L17 12 M17 0 L0 12" stroke="#fff" stroke-width="2.4"/><path d="M0 0 L17 12 M17 0 L0 12" stroke="#e63946" stroke-width="0.8"/><rect x="6.8" y="0" width="3.4" height="12" fill="#fff"/><rect x="0" y="4.3" width="17" height="3.4" fill="#fff"/><rect x="7.6" y="0" width="1.8" height="12" fill="#e63946"/><rect x="0" y="5.1" width="17" height="1.8" fill="#e63946"/></svg>
<div class="t" style="left:598px;top:515px;font-size:14px;line-height:16px;color:#1d1f26">+44</div>
<div class="t" style="left:629px;top:515px;font-size:14px;line-height:16px;color:#1d1f26">17645990022</div>
<svg class="abs" style="left:777px;top:511px;overflow:visible" width="24" height="24" viewBox="0 0 24 24"><defs><radialGradient id="gi" cx="0.3" cy="1.02" r="1.05"><stop offset="0" stop-color="#ffd600"/><stop offset="0.22" stop-color="#ff7a00"/><stop offset="0.5" stop-color="#ff0069"/><stop offset="0.75" stop-color="#d300c5"/><stop offset="1" stop-color="#7638fa"/></radialGradient></defs><circle cx="12" cy="12" r="12.9" fill="#fff"/><circle cx="12" cy="12" r="12" fill="url(#gi)"/><rect x="5.3" y="5.3" width="13.4" height="13.4" rx="3.9" fill="none" stroke="#fff" stroke-width="1.5"/><circle cx="12" cy="12" r="3.2" fill="none" stroke="#fff" stroke-width="1.5"/><circle cx="15.6" cy="8.3" r="0.85" fill="#fff"/></svg>
<div class="pill" style="left:955px;top:511px;width:92px;background:#eaf3fe;border-color:#b9d7f8;color:#1a6fdc">Potential lead</div>
<div class="t" style="left:1140px;top:515px;font-size:14px;line-height:16px;color:#1d1f26">SUVs</div>
<div class="t" style="left:1320px;top:515px;font-size:14px;line-height:16px;color:#1d1f26">12.08.2024</div></div>
</div>
</body></html>
